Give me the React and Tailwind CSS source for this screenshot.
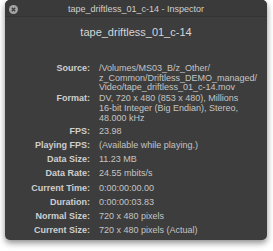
export default function App() {
  const rows = [
    ["Source:", ["/Volumes/MS03_B/z_Other/", "z_Common/Driftless_DEMO_managed/", "Video/tape_driftless_01_c-14.mov"], "mb-[1px]"],
    ["Format:", ["DV, 720 x 480 (853 x 480), Millions", "16-bit Integer (Big Endian), Stereo,", "48.000 kHz"], "mb-[3px]"],
    ["FPS:", ["23.98"], "mb-[4px]"],
    ["Playing FPS:", ["(Available while playing.)"], "mb-[4px]"],
    ["Data Size:", ["11.23 MB"], "mb-[4px]"],
    ["Data Rate:", ["24.55 mbits/s"], "mb-[4.5px]"],
    ["Current Time:", ["0:00:00:00.00"], "mb-[4px]"],
    ["Duration:", ["0:00:00:03.83"], "mb-[4px]"],
    ["Normal Size:", ["720 x 480 pixels"], "mb-[4px]"],
    ["Current Size:", ["720 x 480 pixels (Actual)"], ""],
  ];

  return (
    <div className="w-[273px] h-[251px] bg-white pl-[5px] font-['Liberation_Sans',sans-serif]">
      <div className="w-[262px] h-[240px] bg-[#3d3d3d] rounded-[5px] shadow-[0_3px_6px_rgba(0,0,0,0.45)] flex flex-col">
        <div className="relative h-[17px] border-b border-[#333] bg-[#3a3a3a] rounded-t-[5px] flex items-center justify-center">
          <div className="absolute left-[4px] top-[5px] w-[9px] h-[9px] rounded-full bg-[#a5a5a5] flex items-center justify-center">
            <svg width="5" height="5" viewBox="0 0 5 5">
              <path d="M0.8 0.8L4.2 4.2M4.2 0.8L0.8 4.2" stroke="#3a3a3a" strokeWidth="1.3" />
            </svg>
          </div>
          <span className="text-[9px] text-[#cfcfcf] leading-none mt-[2px]">tape_driftless_01_c-14 - Inspector</span>
        </div>

        <div className="text-center text-[11px] text-[#d6d6d6] mt-[10px] leading-none">
          tape_driftless_01_c-14
        </div>

        <div className="mt-[26px] flex flex-col text-[9px]">
          {rows.map(([label, lines, mb]) => (
            <div key={label} className={`flex ${mb} ${lines.length > 1 ? "leading-[9.7px]" : "leading-[10px]"}`}>
              <div className="w-[85px] text-right font-bold text-[#cfcfcf] shrink-0">{label}</div>
              <div className="pl-[9px] text-[#c4c4c4]">
                {lines.map((l) => (
                  <div key={l}>{l}</div>
                ))}
              </div>
            </div>
          ))}
        </div>
      </div>
    </div>
  );
}
